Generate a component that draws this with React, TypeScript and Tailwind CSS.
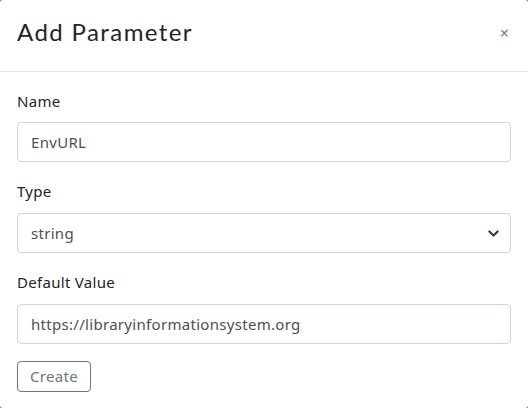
import React from "react";

export default function App() {
  const font = { fontFamily: '"Noto Sans", "Open Sans", sans-serif' };
  return (
    <div className="w-[528px] h-[408px] bg-[#888] overflow-hidden" style={font}>
      <div className="w-[528px] h-[408px] bg-white rounded-[3px] flex flex-col">
        <div className="h-[72px] border-b border-[#dee2e6] flex items-center justify-between pl-[17px] pr-[19px]">
          <h1 className="text-[24px] text-[#212529] tracking-[1.4px] leading-none pb-[8px]" style={{ fontFamily: '"Lato", "Noto Sans", sans-serif' }}>
            Add Parameter
          </h1>
          <button className="text-[#777] text-[16px] leading-none pb-[5px]">×</button>
        </div>
        <div className="px-[17px] pt-[18px] flex flex-col tracking-[0.3px]">
          <label className="text-[15px] text-[#212529] leading-[22px]">Name</label>
          <input
            className="mt-[10px] h-[40px] w-full border border-[#ced4da] rounded-[4px] px-[13px] text-[15px] text-[#495057] outline-none tracking-[0.3px]"
            defaultValue="EnvURL"
          />
          <label className="mt-[18px] text-[15px] text-[#212529] leading-[22px]">Type</label>
          <div className="mt-[11px] h-[40px] w-full border border-[#ced4da] rounded-[4px] pl-[13px] pr-[11px] flex items-center justify-between text-[15px] text-[#495057]">
            <span>string</span>
            <svg width="11" height="11" viewBox="0 0 16 16" fill="none">
              <path d="M2 5l6 6 6-6" stroke="#343a40" strokeWidth="3" strokeLinecap="round" strokeLinejoin="round" />
            </svg>
          </div>
          <label className="mt-[18px] text-[15px] text-[#212529] leading-[22px]">Default Value</label>
          <input
            className="mt-[11px] h-[40px] w-full border border-[#ced4da] rounded-[4px] px-[13px] text-[15px] text-[#495057] outline-none tracking-[0.3px]"
            defaultValue="https://libraryinformationsystem.org"
          />
          <div className="mt-[17px]">
            <button className="h-[31px] px-[12px] border border-[#6c757d] rounded-[4px] text-[15px] text-[#6c757d] leading-none tracking-[0.3px]">
              Create
            </button>
          </div>
        </div>
      </div>
    </div>
  );
}
